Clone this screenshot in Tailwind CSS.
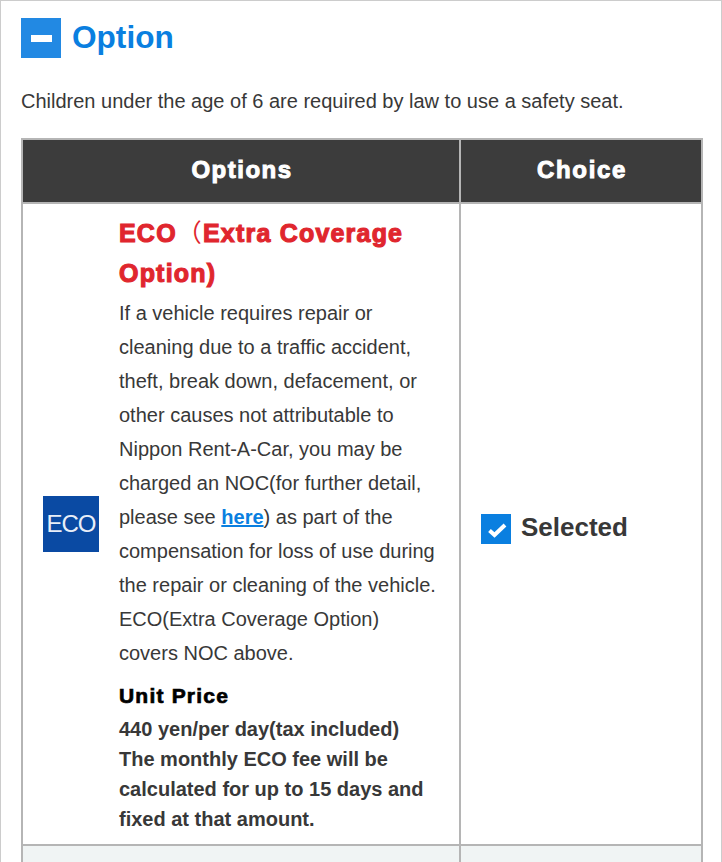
<!DOCTYPE html>
<html><head><meta charset="utf-8"><script src="https://cdn.jsdelivr.net/npm/@tailwindcss/browser@4"></script></head>
<body class="bg-white">
<div class="h-[862px] overflow-hidden border-t border-l border-r border-[#cccccc] pt-[17px] px-5 w-[722px] font-['Liberation_Sans',Arial,sans-serif] text-[#383838]">
  <div class="flex items-center gap-[11px] h-10">
    <div class="w-10 h-10 bg-[#2289e3] flex items-center justify-center"><div class="w-[21px] h-[7px] bg-white"></div></div>
    <h2 class="text-[31.6px] font-bold text-[#0a7fe0]">Option</h2>
  </div>
  <p class="mt-[28px] text-xl leading-[30px]">Children under the age of 6 are required by law to use a safety seat.</p>
  <table class="mt-[22px] w-[682px] table-fixed border-collapse">
    <thead>
      <tr class="h-[64px] bg-[#3c3c3c] text-white text-2xl">
        <th class="w-[438px] border-2 border-[#b5b5b5] pl-[2px] pb-[2px] font-bold tracking-[1.5px] [-webkit-text-stroke:1px_white]">Options</th>
        <th class="border-2 border-[#b5b5b5] pl-[2px] pb-[2px] font-bold tracking-[1.7px] [-webkit-text-stroke:1px_white]">Choice</th>
      </tr>
    </thead>
    <tbody>
      <tr>
        <td class="border-2 border-[#b5b5b5] p-0">
          <div class="flex items-center pl-[20px] pr-5">
            <div class="w-14 h-14 shrink-0 bg-[#0a4aa3] flex items-center justify-center text-[#e8eef8] text-2xl tracking-[-1px]">ECO</div>
            <div class="ml-5 pt-[7px] pb-[10px]">
              <div class="text-[25px] leading-[40px] font-bold text-[#e0262e] tracking-[1.2px] [-webkit-text-stroke:1.1px_#e0262e]">ECO<span class="font-['Noto_Sans_CJK_JP',sans-serif] font-normal [-webkit-text-stroke:0px]">（</span>Extra Coverage Option)</div>
              <p class="mt-[3px] text-xl leading-[34px]">If a vehicle requires repair or cleaning due to a traffic accident, theft, break down, defacement, or other causes not attributable to Nippon Rent-A-Car, you may be charged an NOC(for further detail, please see <a class="font-bold text-[#0a7fe0] underline">here</a>) as part of the compensation for loss of use during the repair or cleaning of the vehicle. ECO(Extra Coverage Option) covers NOC above.</p>
              <div class="mt-[11px] mb-[3px] text-[21px] leading-[30px] font-bold text-black tracking-[1.2px] [-webkit-text-stroke:0.7px_black]">Unit Price</div>
              <p class="text-xl leading-[30px] font-bold">440 yen/per day(tax included)<br>The monthly ECO fee will be calculated for up to 15 days and fixed at that amount.</p>
            </div>
          </div>
        </td>
        <td class="border-2 border-[#b5b5b5] align-middle pl-5 pt-[10px]">
          <div class="flex items-center gap-[10px]">
            <div class="w-[30px] h-[30px] bg-[#0a7fe0] flex items-center justify-center">
              <svg width="30" height="30" viewBox="0 0 30 30"><path d="M8.5 16.5 L13.5 21 L24 11" fill="none" stroke="white" stroke-width="4"/></svg>
            </div>
            <span class="text-[26px] font-bold leading-none pb-1">Selected</span>
          </div>
        </td>
      </tr>
      <tr class="h-[40px] bg-[#f0f4f4]">
        <td class="border-2 border-[#b5b5b5]"></td>
        <td class="border-2 border-[#b5b5b5]"></td>
      </tr>
    </tbody>
  </table>
</div>
</body></html>
